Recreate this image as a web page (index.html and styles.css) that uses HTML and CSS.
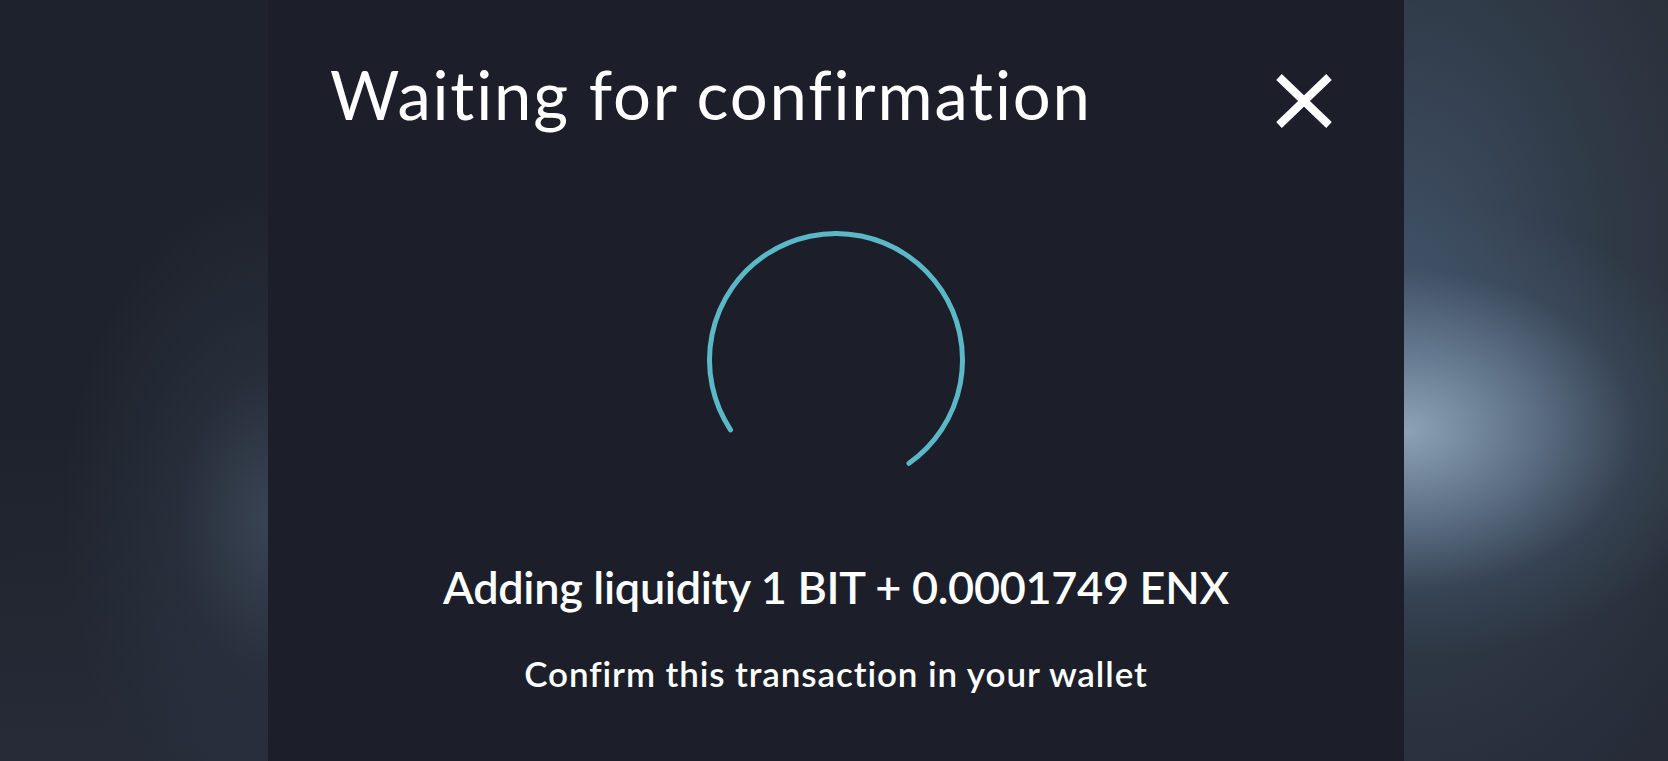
FILE: index.html
```html
<!DOCTYPE html>
<html lang="en">
<head>
<meta charset="utf-8">
<title>Waiting for confirmation</title>
<link rel="stylesheet" href="styles.css">
</head>
<body>
<div class="backdrop">
  <div class="side"></div>
  <section class="modal">
    <header class="modal-header">
      <h1 class="modal-title">Waiting for confirmation</h1>
      <button class="close-btn" aria-label="Close">
        <svg class="close-icon" viewBox="0 0 56 54" width="56" height="54">
          <line x1="3" y1="3" x2="53" y2="51" />
          <line x1="53" y1="3" x2="3" y2="51" />
        </svg>
      </button>
    </header>
    <div class="modal-body">
      <svg class="spinner" viewBox="0 0 264 264" width="264" height="264">
        <circle cx="132" cy="132" r="126.5" transform="rotate(146.5 132 132)" />
      </svg>
      <p class="tx-summary">Adding liquidity 1 BIT + 0.0001749 ENX</p>
      <p class="tx-hint">Confirm this transaction in your wallet</p>
    </div>
  </section>
  <div class="side"></div>
</div>
</body>
</html>
```
FILE: styles.css
```css
* { box-sizing: border-box; }

html, body {
  margin: 0;
  height: 100%;
}

body {
  font-family: "Lato", "Noto Sans", sans-serif;
  color: #ffffff;
  overflow: hidden;
  background-color: #1f232d;
  background-image:
    radial-gradient(ellipse 330px 230px at 1405px 430px, rgba(146,166,188,0.95) 0%, rgba(112,134,158,0.75) 35%, rgba(66,84,104,0.4) 70%, rgba(40,48,60,0) 100%),
    radial-gradient(ellipse 380px 600px at 1405px 280px, rgba(66,84,106,0.9) 0%, rgba(52,66,82,0.6) 55%, rgba(40,46,56,0) 100%),
    radial-gradient(ellipse 210px 330px at 272px 520px, rgba(60,72,88,0.9) 0%, rgba(44,53,66,0.6) 45%, rgba(31,35,45,0) 100%),
    linear-gradient(180deg, rgba(31,35,45,0) 55%, rgba(38,43,55,1) 100%),
    linear-gradient(90deg, #1e222c 0%, #1f232d 40%, #282c34 100%);
}

.backdrop {
  display: grid;
  grid-template-columns: 268px 1136px 1fr;
  height: 761px;
}

.modal {
  background: #1c1f2a;
  display: flex;
  flex-direction: column;
  height: 100%;
}

.modal-header {
  display: flex;
  justify-content: space-between;
  align-items: flex-start;
  padding: 61px 72px 0 62px;
}

.modal-title {
  margin: 0;
  font-size: 67px;
  line-height: 1;
  font-weight: 400;
  letter-spacing: 1.8px;
}

.close-btn {
  margin: 13px 0 0;
  padding: 0;
  border: 0;
  background: none;
  display: block;
  cursor: pointer;
}

.close-icon {
  display: block;
  stroke: #ffffff;
  stroke-width: 8;
  stroke-linecap: butt;
}

.modal-body {
  display: flex;
  flex-direction: column;
  align-items: center;
  padding-top: 100px;
}

.spinner {
  display: block;
  fill: none;
  stroke: #5bb9c7;
  stroke-width: 5;
  stroke-linecap: round;
  stroke-dasharray: 592 210;
}

.tx-summary {
  margin: 73px 0 0;
  font-size: 45px;
  line-height: 1;
  font-weight: 600;
  letter-spacing: -0.3px;
}

.tx-hint {
  margin: 46px 0 0;
  font-size: 35px;
  line-height: 1;
  font-weight: 600;
  letter-spacing: 0.9px;
}
```
